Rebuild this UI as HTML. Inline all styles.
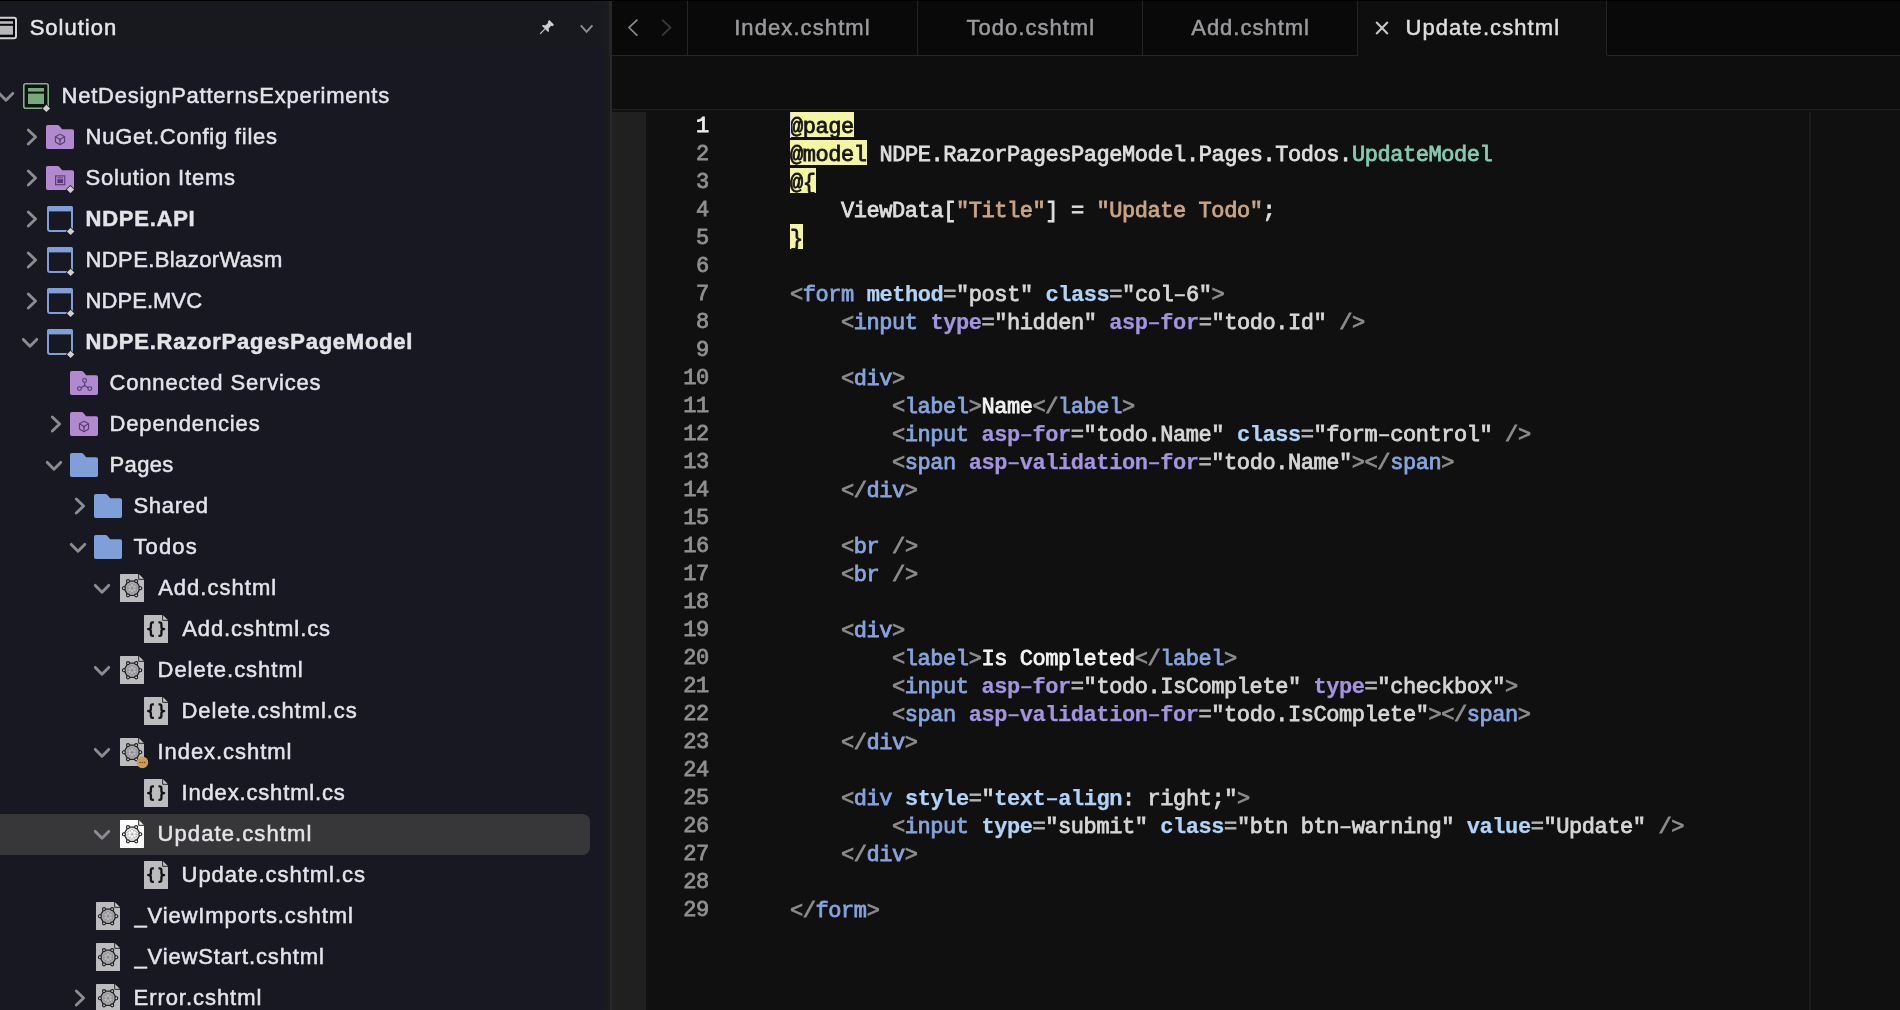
<!DOCTYPE html>
<html><head><meta charset="utf-8"><title>Update.cshtml</title><style>
*{box-sizing:border-box;margin:0;padding:0}
html,body{width:1900px;height:1010px;overflow:hidden;background:#101010}
body{position:relative;font-family:"Liberation Sans",sans-serif}
.ic{position:absolute;overflow:visible;display:block}
#top{position:absolute;left:0;top:0;width:1900px;height:1.25px;background:#000;z-index:9}
#sb{position:absolute;left:0;top:0;width:610px;height:1010px;background:#171822;overflow:hidden}
.lb,.ln,.cl{will-change:transform}
#sbh{position:absolute;left:0;top:0;width:100%;height:48px;background:#18191f}
#dv{position:absolute;left:609.9px;top:0;width:2.1px;height:1010px;background:#29292b}
#dvh{position:absolute;left:608.9px;top:0;width:3.1px;height:55.6px;background:#262628}
#sbg{position:absolute;left:602px;top:0;width:8px;height:1010px;background:linear-gradient(90deg,rgba(26,27,30,0),rgba(26,27,30,1) 40%)}
.lb{position:absolute;white-space:pre;font-size:22px;-webkit-text-stroke:0.5px currentColor}
.sel{position:absolute;left:0;width:590px;height:41px;background:#37373a;border-radius:0 7.5px 7.5px 0}
#tb{position:absolute;left:612px;top:0;width:1288px;height:56px;background:#09090a;border-bottom:1.2px solid #262628}
#tb .ic,#tb .lb,#tb .vs,#atab{margin-left:-612px}
.vs{position:absolute;top:0;width:1.2px;height:55px;background:#242426}
#atab{position:absolute;left:1358px;top:0;width:248.5px;height:57px;background:#0e0e0f}
#tool{position:absolute;left:612px;top:56px;width:1288px;height:54px;background:#0e0e0f;border-bottom:1.3px solid #222224}
#ed{position:absolute;left:612px;top:110px;width:1288px;height:900px;background:#101011}
#ed>*{margin-left:-612px;margin-top:-110px}
#gut{position:absolute;left:612px;top:112.2px;width:34px;height:900px;background:#202021}
#rul{position:absolute;left:1809.3px;top:112px;width:1.6px;height:900px;background:#1b1b1c}
.ln,.cl{position:absolute;font-family:"Liberation Mono",monospace;font-size:22.0px;letter-spacing:-0.432px;white-space:pre;line-height:28px;height:28px;-webkit-text-stroke:0.8px currentColor}
.ln{left:640px;width:68.83px;text-align:right;color:#8f8f91;letter-spacing:-0.432px}
.ln.cur{color:#ececee}
.cl{color:#dededf}
.p{color:#8c8c8e} .t{color:#87a4dd} .a{color:#b0d3f8;font-weight:700} .h{color:#a493df;font-weight:700}
.e{color:#b2b2b4} .v{color:#d6d6d8} .s{color:#c9a585} .c{color:#84cbb0} .w{color:#f4f4f4}
.r{color:#161616;position:relative;z-index:1}
.r::before{content:'';position:absolute;left:0;right:-0.432px;top:-3.5px;height:25.7px;background:#f5f5a6;z-index:-1}
.a,.h{-webkit-text-stroke:0.25px currentColor}
.cl i{font-style:normal;font-weight:400;-webkit-text-stroke:0.5px currentColor}
#caret{position:absolute;left:789.6px;top:112.4px;width:1.6px;height:25.4px;background:#d9d9ee;z-index:3}
</style></head><body><div id="top"></div>
<div id="sb"><div id="sbh"></div>
<svg class="ic" style="left:-6px;top:16px" width="26" height="26" viewBox="0 0 26 26"><rect x="1" y="1.8" width="21" height="20.4" rx="2" fill="#060607" stroke="#d2d2d6" stroke-width="2"/><rect x="4.6" y="5.2" width="14.4" height="2.6" fill="#b8b8bb"/><rect x="4.6" y="9.8" width="14.4" height="8.9" fill="#b8b8bb"/></svg>
<div class="lb" style="left:29px;padding-left:0.65px;top:7px;height:41px;line-height:41px;font-weight:400;color:#e6e6ea;letter-spacing:1.001px">Solution</div>
<svg class="ic" style="left:537px;top:17px" width="20" height="20" viewBox="0 0 20 20"><g transform="translate(8.9 11.1) rotate(45)" fill="#cdcdd0"><path d="M-3.3 -8.2 H3.3 V-6 L2 -5.2 L2.4 -1.4 Q4.6 -0.6 4.6 1.2 H-4.6 Q-4.6 -0.6 -2.4 -1.4 L-2 -5.2 L-3.3 -6 Z"/><rect x="-0.55" y="1.2" width="1.1" height="7"/></g></svg>
<svg class="ic" style="left:576px;top:20px" width="22" height="18" viewBox="0 0 22 18"><path d="M4.8 5.3 L10.6 11.9 L16.4 5.3" fill="none" stroke="#8c8c91" stroke-width="1.9" stroke-linecap="butt" stroke-linejoin="miter"/></svg>
<svg class="ic" style="left:-5px;top:87.8px" width="22" height="16" viewBox="0 0 22 16"><path d="M4.3 5.4 L11 12.3 L17.7 5.4" fill="none" stroke="#8b8b91" stroke-width="2.9" stroke-linecap="round" stroke-linejoin="round"/></svg>
<svg class="ic" style="left:23px;top:83px" width="32" height="32" viewBox="0 0 32 32"><rect x="0.8" y="0.8" width="24.4" height="24.4" rx="2" fill="#0d1510" stroke="#86b08a" stroke-width="1.6"/><rect x="5" y="5" width="16" height="3.6" fill="#78a87c"/><rect x="5" y="10.6" width="16" height="10.4" fill="#78a87c"/><path d="M23.4 21.7 L27.099999999999998 25.4 L23.4 29.099999999999998 L19.7 25.4 Z" fill="#cfcfd1" stroke="#171822" stroke-width="1.4" paint-order="stroke"/></svg>
<div class="lb" style="left:61px;padding-left:0.50px;top:75.0px;height:41px;line-height:41px;font-weight:400;color:#e4e4e8;letter-spacing:0.768px">NetDesignPatternsExperiments</div>
<svg class="ic" style="left:24px;top:126px" width="16" height="22" viewBox="0 0 16 22"><path d="M4.3 4 L11.6 11 L4.3 18" fill="none" stroke="#8b8b91" stroke-width="2.9" stroke-linecap="round" stroke-linejoin="round"/></svg>
<svg class="ic" style="left:46px;top:125px" width="34" height="30" viewBox="0 0 34 30"><path d="M0 1.8 Q0 0 1.8 0 H11.6 Q12.6 0 13.4 0.9 L16.2 4.2 H26.2 Q28 4.2 28 6 V22.2 Q28 24 26.2 24 H1.8 Q0 24 0 22.2 Z" fill="#b189ce"/><path d="M14 9.1 L18.6 11.75 V17.05 L14 19.7 L9.4 17.05 V11.75 Z" fill="none" stroke="#573a72" stroke-width="1.05" stroke-linejoin="round"/><path d="M9.8 12 L14 14.4 L18.2 12 M14 14.4 V19.3" fill="none" stroke="#573a72" stroke-width="1.05"/><path d="M12.4 13.5 L14 14.4 L15.6 13.5 L14 16.8Z" fill="#573a72"/></svg>
<div class="lb" style="left:85px;padding-left:0.50px;top:116.0px;height:41px;line-height:41px;font-weight:400;color:#e4e4e8;letter-spacing:0.766px">NuGet.Config files</div>
<svg class="ic" style="left:24px;top:167px" width="16" height="22" viewBox="0 0 16 22"><path d="M4.3 4 L11.6 11 L4.3 18" fill="none" stroke="#8b8b91" stroke-width="2.9" stroke-linecap="round" stroke-linejoin="round"/></svg>
<svg class="ic" style="left:46px;top:166px" width="34" height="30" viewBox="0 0 34 30"><path d="M0 1.8 Q0 0 1.8 0 H11.6 Q12.6 0 13.4 0.9 L16.2 4.2 H26.2 Q28 4.2 28 6 V22.2 Q28 24 26.2 24 H1.8 Q0 24 0 22.2 Z" fill="#b189ce"/><rect x="9.6" y="9.9" width="9.2" height="8.8" fill="none" stroke="#573a72" stroke-width="1.1"/><rect x="11.3" y="13.2" width="5.8" height="3.9" fill="#573a72"/><rect x="11.3" y="11.4" width="5.8" height="0.9" fill="#573a72"/><path d="M24.4 19.900000000000002 L28.099999999999998 23.6 L24.4 27.3 L20.7 23.6 Z" fill="#cfcfd1" stroke="#171822" stroke-width="1.4" paint-order="stroke"/></svg>
<div class="lb" style="left:85px;padding-left:0.50px;top:157.0px;height:41px;line-height:41px;font-weight:400;color:#e4e4e8;letter-spacing:0.778px">Solution Items</div>
<svg class="ic" style="left:24px;top:208px" width="16" height="22" viewBox="0 0 16 22"><path d="M4.3 4 L11.6 11 L4.3 18" fill="none" stroke="#8b8b91" stroke-width="2.9" stroke-linecap="round" stroke-linejoin="round"/></svg>
<svg class="ic" style="left:47px;top:206px" width="32" height="32" viewBox="0 0 32 32"><rect x="1" y="1" width="24" height="24" rx="2" fill="none" stroke="#7f9fd9" stroke-width="2"/><rect x="1" y="0.4" width="24" height="4.8" fill="#7f9fd9"/><path d="M0 2 Q0 0 2 0 H24 Q26 0 26 2 V5.2 H0 Z" fill="#7f9fd9"/><path d="M23.6 21.7 L27.3 25.4 L23.6 29.099999999999998 L19.900000000000002 25.4 Z" fill="#cfcfd1" stroke="#171822" stroke-width="1.4" paint-order="stroke"/></svg>
<div class="lb" style="left:85px;padding-left:0.50px;top:198.0px;height:41px;line-height:41px;font-weight:700;color:#e4e4e8;letter-spacing:0.752px">NDPE.API</div>
<svg class="ic" style="left:24px;top:249px" width="16" height="22" viewBox="0 0 16 22"><path d="M4.3 4 L11.6 11 L4.3 18" fill="none" stroke="#8b8b91" stroke-width="2.9" stroke-linecap="round" stroke-linejoin="round"/></svg>
<svg class="ic" style="left:47px;top:247px" width="32" height="32" viewBox="0 0 32 32"><rect x="1" y="1" width="24" height="24" rx="2" fill="none" stroke="#7f9fd9" stroke-width="2"/><rect x="1" y="0.4" width="24" height="4.8" fill="#7f9fd9"/><path d="M0 2 Q0 0 2 0 H24 Q26 0 26 2 V5.2 H0 Z" fill="#7f9fd9"/><path d="M23.6 21.7 L27.3 25.4 L23.6 29.099999999999998 L19.900000000000002 25.4 Z" fill="#cfcfd1" stroke="#171822" stroke-width="1.4" paint-order="stroke"/></svg>
<div class="lb" style="left:85px;padding-left:0.50px;top:239.0px;height:41px;line-height:41px;font-weight:400;color:#e4e4e8;letter-spacing:0.401px">NDPE.BlazorWasm</div>
<svg class="ic" style="left:24px;top:290px" width="16" height="22" viewBox="0 0 16 22"><path d="M4.3 4 L11.6 11 L4.3 18" fill="none" stroke="#8b8b91" stroke-width="2.9" stroke-linecap="round" stroke-linejoin="round"/></svg>
<svg class="ic" style="left:47px;top:288px" width="32" height="32" viewBox="0 0 32 32"><rect x="1" y="1" width="24" height="24" rx="2" fill="none" stroke="#7f9fd9" stroke-width="2"/><rect x="1" y="0.4" width="24" height="4.8" fill="#7f9fd9"/><path d="M0 2 Q0 0 2 0 H24 Q26 0 26 2 V5.2 H0 Z" fill="#7f9fd9"/><path d="M23.6 21.7 L27.3 25.4 L23.6 29.099999999999998 L19.900000000000002 25.4 Z" fill="#cfcfd1" stroke="#171822" stroke-width="1.4" paint-order="stroke"/></svg>
<div class="lb" style="left:85px;padding-left:0.50px;top:280.0px;height:41px;line-height:41px;font-weight:400;color:#e4e4e8;letter-spacing:0.067px">NDPE.MVC</div>
<svg class="ic" style="left:19px;top:333.8px" width="22" height="16" viewBox="0 0 22 16"><path d="M4.3 5.4 L11 12.3 L17.7 5.4" fill="none" stroke="#8b8b91" stroke-width="2.9" stroke-linecap="round" stroke-linejoin="round"/></svg>
<svg class="ic" style="left:47px;top:329px" width="32" height="32" viewBox="0 0 32 32"><rect x="1" y="1" width="24" height="24" rx="2" fill="none" stroke="#7f9fd9" stroke-width="2"/><rect x="1" y="0.4" width="24" height="4.8" fill="#7f9fd9"/><path d="M0 2 Q0 0 2 0 H24 Q26 0 26 2 V5.2 H0 Z" fill="#7f9fd9"/><path d="M23.6 21.7 L27.3 25.4 L23.6 29.099999999999998 L19.900000000000002 25.4 Z" fill="#cfcfd1" stroke="#171822" stroke-width="1.4" paint-order="stroke"/></svg>
<div class="lb" style="left:85px;padding-left:0.50px;top:321.0px;height:41px;line-height:41px;font-weight:700;color:#e4e4e8;letter-spacing:0.768px">NDPE.RazorPagesPageModel</div>
<svg class="ic" style="left:70px;top:371px" width="34" height="30" viewBox="0 0 34 30"><path d="M0 1.8 Q0 0 1.8 0 H11.6 Q12.6 0 13.4 0.9 L16.2 4.2 H26.2 Q28 4.2 28 6 V22.2 Q28 24 26.2 24 H1.8 Q0 24 0 22.2 Z" fill="#b189ce"/><path d="M14.6 11.3 V14.6 L11 16.7 M14.6 14.6 L18.2 16.7" fill="none" stroke="#573a72" stroke-width="1.1"/><circle cx="14.6" cy="9.4" r="1.9" fill="none" stroke="#573a72" stroke-width="1.1"/><circle cx="9.4" cy="17.6" r="1.9" fill="none" stroke="#573a72" stroke-width="1.1"/><circle cx="19.8" cy="17.6" r="1.9" fill="none" stroke="#573a72" stroke-width="1.1"/></svg>
<div class="lb" style="left:109px;padding-left:0.50px;top:362.0px;height:41px;line-height:41px;font-weight:400;color:#e4e4e8;letter-spacing:0.837px">Connected Services</div>
<svg class="ic" style="left:48px;top:413px" width="16" height="22" viewBox="0 0 16 22"><path d="M4.3 4 L11.6 11 L4.3 18" fill="none" stroke="#8b8b91" stroke-width="2.9" stroke-linecap="round" stroke-linejoin="round"/></svg>
<svg class="ic" style="left:70px;top:412px" width="34" height="30" viewBox="0 0 34 30"><path d="M0 1.8 Q0 0 1.8 0 H11.6 Q12.6 0 13.4 0.9 L16.2 4.2 H26.2 Q28 4.2 28 6 V22.2 Q28 24 26.2 24 H1.8 Q0 24 0 22.2 Z" fill="#b189ce"/><path d="M14 9.1 L18.6 11.75 V17.05 L14 19.7 L9.4 17.05 V11.75 Z" fill="none" stroke="#573a72" stroke-width="1.05" stroke-linejoin="round"/><path d="M9.8 12 L14 14.4 L18.2 12 M14 14.4 V19.3" fill="none" stroke="#573a72" stroke-width="1.05"/><path d="M12.4 13.5 L14 14.4 L15.6 13.5 L14 16.8Z" fill="#573a72"/></svg>
<div class="lb" style="left:109px;padding-left:0.50px;top:403.0px;height:41px;line-height:41px;font-weight:400;color:#e4e4e8;letter-spacing:0.870px">Dependencies</div>
<svg class="ic" style="left:43px;top:456.8px" width="22" height="16" viewBox="0 0 22 16"><path d="M4.3 5.4 L11 12.3 L17.7 5.4" fill="none" stroke="#8b8b91" stroke-width="2.9" stroke-linecap="round" stroke-linejoin="round"/></svg>
<svg class="ic" style="left:70px;top:453px" width="34" height="30" viewBox="0 0 34 30"><path d="M0 1.8 Q0 0 1.8 0 H11.6 Q12.6 0 13.4 0.9 L16.2 4.2 H26.2 Q28 4.2 28 6 V22.2 Q28 24 26.2 24 H1.8 Q0 24 0 22.2 Z" fill="#7f9fd8"/></svg>
<div class="lb" style="left:109px;padding-left:0.50px;top:444.0px;height:41px;line-height:41px;font-weight:400;color:#e4e4e8;letter-spacing:0.363px">Pages</div>
<svg class="ic" style="left:72px;top:495px" width="16" height="22" viewBox="0 0 16 22"><path d="M4.3 4 L11.6 11 L4.3 18" fill="none" stroke="#8b8b91" stroke-width="2.9" stroke-linecap="round" stroke-linejoin="round"/></svg>
<svg class="ic" style="left:94px;top:494px" width="34" height="30" viewBox="0 0 34 30"><path d="M0 1.8 Q0 0 1.8 0 H11.6 Q12.6 0 13.4 0.9 L16.2 4.2 H26.2 Q28 4.2 28 6 V22.2 Q28 24 26.2 24 H1.8 Q0 24 0 22.2 Z" fill="#7f9fd8"/></svg>
<div class="lb" style="left:133px;padding-left:0.50px;top:485.0px;height:41px;line-height:41px;font-weight:400;color:#e4e4e8;letter-spacing:0.684px">Shared</div>
<svg class="ic" style="left:67px;top:538.8px" width="22" height="16" viewBox="0 0 22 16"><path d="M4.3 5.4 L11 12.3 L17.7 5.4" fill="none" stroke="#8b8b91" stroke-width="2.9" stroke-linecap="round" stroke-linejoin="round"/></svg>
<svg class="ic" style="left:94px;top:535px" width="34" height="30" viewBox="0 0 34 30"><path d="M0 1.8 Q0 0 1.8 0 H11.6 Q12.6 0 13.4 0.9 L16.2 4.2 H26.2 Q28 4.2 28 6 V22.2 Q28 24 26.2 24 H1.8 Q0 24 0 22.2 Z" fill="#7f9fd8"/></svg>
<div class="lb" style="left:133px;padding-left:0.50px;top:526.0px;height:41px;line-height:41px;font-weight:400;color:#e4e4e8;letter-spacing:1.106px">Todos</div>
<svg class="ic" style="left:91px;top:579.8px" width="22" height="16" viewBox="0 0 22 16"><path d="M4.3 5.4 L11 12.3 L17.7 5.4" fill="none" stroke="#8b8b91" stroke-width="2.9" stroke-linecap="round" stroke-linejoin="round"/></svg>
<svg class="ic" style="left:120px;top:574px" width="32" height="36" viewBox="0 0 32 36"><path d="M0.5 0 H18.6 L24 5.4 V27.5 Q24 28 23.5 28 H0.5 Q0 28 0 27.5 V0.5 Q0 0 0.5 0 Z" fill="#bcbcbf"/><path d="M18.9 0.3 V5.1 H23.7 Z" fill="#c9c9cb"/><path d="M18.7 0 V5.3 H24" fill="none" stroke="#232325" stroke-width="1"/><path d="M20.30 14.20 L8.00 21.30 M20.30 14.20 L3.90 14.20 M20.30 14.20 L8.00 7.10 M16.20 21.30 L3.90 14.20 M16.20 21.30 L8.00 7.10 M16.20 21.30 L16.20 7.10 M8.00 21.30 L8.00 7.10 M8.00 21.30 L16.20 7.10 M3.90 14.20 L16.20 7.10 " fill="none" stroke="#38383a" stroke-width="0.5" opacity="0.5"/><path d="M20.30 14.20 L16.20 21.30 L8.00 21.30 L3.90 14.20 L8.00 7.10 L16.20 7.10 Z" fill="none" stroke="#1f1f21" stroke-width="1.3"/><circle cx="20.30" cy="14.20" r="1.5" fill="#cbcbcd" stroke="#1f1f21" stroke-width="1.15"/><circle cx="16.20" cy="21.30" r="1.5" fill="#cbcbcd" stroke="#1f1f21" stroke-width="1.15"/><circle cx="8.00" cy="21.30" r="1.5" fill="#cbcbcd" stroke="#1f1f21" stroke-width="1.15"/><circle cx="3.90" cy="14.20" r="1.5" fill="#cbcbcd" stroke="#1f1f21" stroke-width="1.15"/><circle cx="8.00" cy="7.10" r="1.5" fill="#cbcbcd" stroke="#1f1f21" stroke-width="1.15"/><circle cx="16.20" cy="7.10" r="1.5" fill="#cbcbcd" stroke="#1f1f21" stroke-width="1.15"/></svg>
<div class="lb" style="left:158px;padding-left:0.20px;top:567.0px;height:41px;line-height:41px;font-weight:400;color:#e4e4e8;letter-spacing:1.013px">Add.cshtml</div>
<svg class="ic" style="left:144px;top:615px" width="28" height="32" viewBox="0 0 28 32"><path d="M0.5 0 H18.6 L24 5.4 V27.5 Q24 28 23.5 28 H0.5 Q0 28 0 27.5 V0.5 Q0 0 0.5 0 Z" fill="#bcbcbf"/><path d="M18.9 0.3 V5.1 H23.7 Z" fill="#c9c9cb"/><path d="M18.7 0 V5.3 H24" fill="none" stroke="#232325" stroke-width="1"/><path d="M9.9 7.3 H8.7 Q6.9 7.3 6.9 9.1 V11.9 Q6.9 14.05 4.1 14.05 Q6.9 14.05 6.9 16.2 V19 Q6.9 20.8 8.7 20.8 H9.9" fill="none" stroke="#141416" stroke-width="2.3" stroke-linejoin="round"/><path d="M14.5 7.3 H15.7 Q17.4 7.3 17.4 9.1 V11.9 Q17.4 14.05 20.2 14.05 Q17.4 14.05 17.4 16.2 V19 Q17.4 20.8 15.7 20.8 H14.5" fill="none" stroke="#141416" stroke-width="2.3" stroke-linejoin="round"/></svg>
<div class="lb" style="left:182px;padding-left:0.20px;top:608.0px;height:41px;line-height:41px;font-weight:400;color:#e4e4e8;letter-spacing:0.912px">Add.cshtml.cs</div>
<svg class="ic" style="left:91px;top:661.8px" width="22" height="16" viewBox="0 0 22 16"><path d="M4.3 5.4 L11 12.3 L17.7 5.4" fill="none" stroke="#8b8b91" stroke-width="2.9" stroke-linecap="round" stroke-linejoin="round"/></svg>
<svg class="ic" style="left:120px;top:656px" width="32" height="36" viewBox="0 0 32 36"><path d="M0.5 0 H18.6 L24 5.4 V27.5 Q24 28 23.5 28 H0.5 Q0 28 0 27.5 V0.5 Q0 0 0.5 0 Z" fill="#bcbcbf"/><path d="M18.9 0.3 V5.1 H23.7 Z" fill="#c9c9cb"/><path d="M18.7 0 V5.3 H24" fill="none" stroke="#232325" stroke-width="1"/><path d="M20.30 14.20 L8.00 21.30 M20.30 14.20 L3.90 14.20 M20.30 14.20 L8.00 7.10 M16.20 21.30 L3.90 14.20 M16.20 21.30 L8.00 7.10 M16.20 21.30 L16.20 7.10 M8.00 21.30 L8.00 7.10 M8.00 21.30 L16.20 7.10 M3.90 14.20 L16.20 7.10 " fill="none" stroke="#38383a" stroke-width="0.5" opacity="0.5"/><path d="M20.30 14.20 L16.20 21.30 L8.00 21.30 L3.90 14.20 L8.00 7.10 L16.20 7.10 Z" fill="none" stroke="#1f1f21" stroke-width="1.3"/><circle cx="20.30" cy="14.20" r="1.5" fill="#cbcbcd" stroke="#1f1f21" stroke-width="1.15"/><circle cx="16.20" cy="21.30" r="1.5" fill="#cbcbcd" stroke="#1f1f21" stroke-width="1.15"/><circle cx="8.00" cy="21.30" r="1.5" fill="#cbcbcd" stroke="#1f1f21" stroke-width="1.15"/><circle cx="3.90" cy="14.20" r="1.5" fill="#cbcbcd" stroke="#1f1f21" stroke-width="1.15"/><circle cx="8.00" cy="7.10" r="1.5" fill="#cbcbcd" stroke="#1f1f21" stroke-width="1.15"/><circle cx="16.20" cy="7.10" r="1.5" fill="#cbcbcd" stroke="#1f1f21" stroke-width="1.15"/></svg>
<div class="lb" style="left:157px;padding-left:0.50px;top:649.0px;height:41px;line-height:41px;font-weight:400;color:#e4e4e8;letter-spacing:0.989px">Delete.cshtml</div>
<svg class="ic" style="left:144px;top:697px" width="28" height="32" viewBox="0 0 28 32"><path d="M0.5 0 H18.6 L24 5.4 V27.5 Q24 28 23.5 28 H0.5 Q0 28 0 27.5 V0.5 Q0 0 0.5 0 Z" fill="#bcbcbf"/><path d="M18.9 0.3 V5.1 H23.7 Z" fill="#c9c9cb"/><path d="M18.7 0 V5.3 H24" fill="none" stroke="#232325" stroke-width="1"/><path d="M9.9 7.3 H8.7 Q6.9 7.3 6.9 9.1 V11.9 Q6.9 14.05 4.1 14.05 Q6.9 14.05 6.9 16.2 V19 Q6.9 20.8 8.7 20.8 H9.9" fill="none" stroke="#141416" stroke-width="2.3" stroke-linejoin="round"/><path d="M14.5 7.3 H15.7 Q17.4 7.3 17.4 9.1 V11.9 Q17.4 14.05 20.2 14.05 Q17.4 14.05 17.4 16.2 V19 Q17.4 20.8 15.7 20.8 H14.5" fill="none" stroke="#141416" stroke-width="2.3" stroke-linejoin="round"/></svg>
<div class="lb" style="left:181px;padding-left:0.50px;top:690.0px;height:41px;line-height:41px;font-weight:400;color:#e4e4e8;letter-spacing:0.917px">Delete.cshtml.cs</div>
<svg class="ic" style="left:91px;top:743.8px" width="22" height="16" viewBox="0 0 22 16"><path d="M4.3 5.4 L11 12.3 L17.7 5.4" fill="none" stroke="#8b8b91" stroke-width="2.9" stroke-linecap="round" stroke-linejoin="round"/></svg>
<svg class="ic" style="left:120px;top:738px" width="32" height="36" viewBox="0 0 32 36"><path d="M0.5 0 H18.6 L24 5.4 V27.5 Q24 28 23.5 28 H0.5 Q0 28 0 27.5 V0.5 Q0 0 0.5 0 Z" fill="#bcbcbf"/><path d="M18.9 0.3 V5.1 H23.7 Z" fill="#c9c9cb"/><path d="M18.7 0 V5.3 H24" fill="none" stroke="#232325" stroke-width="1"/><path d="M20.30 14.20 L8.00 21.30 M20.30 14.20 L3.90 14.20 M20.30 14.20 L8.00 7.10 M16.20 21.30 L3.90 14.20 M16.20 21.30 L8.00 7.10 M16.20 21.30 L16.20 7.10 M8.00 21.30 L8.00 7.10 M8.00 21.30 L16.20 7.10 M3.90 14.20 L16.20 7.10 " fill="none" stroke="#38383a" stroke-width="0.5" opacity="0.5"/><path d="M20.30 14.20 L16.20 21.30 L8.00 21.30 L3.90 14.20 L8.00 7.10 L16.20 7.10 Z" fill="none" stroke="#1f1f21" stroke-width="1.3"/><circle cx="20.30" cy="14.20" r="1.5" fill="#cbcbcd" stroke="#1f1f21" stroke-width="1.15"/><circle cx="16.20" cy="21.30" r="1.5" fill="#cbcbcd" stroke="#1f1f21" stroke-width="1.15"/><circle cx="8.00" cy="21.30" r="1.5" fill="#cbcbcd" stroke="#1f1f21" stroke-width="1.15"/><circle cx="3.90" cy="14.20" r="1.5" fill="#cbcbcd" stroke="#1f1f21" stroke-width="1.15"/><circle cx="8.00" cy="7.10" r="1.5" fill="#cbcbcd" stroke="#1f1f21" stroke-width="1.15"/><circle cx="16.20" cy="7.10" r="1.5" fill="#cbcbcd" stroke="#1f1f21" stroke-width="1.15"/><circle cx="22.4" cy="24.4" r="5.8" fill="#d29a57"/><circle cx="20.1" cy="24.5" r="0.8" fill="#6b4a22"/><circle cx="22.4" cy="24.5" r="0.8" fill="#6b4a22"/><circle cx="24.7" cy="24.5" r="0.8" fill="#6b4a22"/></svg>
<div class="lb" style="left:157px;padding-left:0.50px;top:731.0px;height:41px;line-height:41px;font-weight:400;color:#e4e4e8;letter-spacing:0.946px">Index.cshtml</div>
<svg class="ic" style="left:144px;top:779px" width="28" height="32" viewBox="0 0 28 32"><path d="M0.5 0 H18.6 L24 5.4 V27.5 Q24 28 23.5 28 H0.5 Q0 28 0 27.5 V0.5 Q0 0 0.5 0 Z" fill="#bcbcbf"/><path d="M18.9 0.3 V5.1 H23.7 Z" fill="#c9c9cb"/><path d="M18.7 0 V5.3 H24" fill="none" stroke="#232325" stroke-width="1"/><path d="M9.9 7.3 H8.7 Q6.9 7.3 6.9 9.1 V11.9 Q6.9 14.05 4.1 14.05 Q6.9 14.05 6.9 16.2 V19 Q6.9 20.8 8.7 20.8 H9.9" fill="none" stroke="#141416" stroke-width="2.3" stroke-linejoin="round"/><path d="M14.5 7.3 H15.7 Q17.4 7.3 17.4 9.1 V11.9 Q17.4 14.05 20.2 14.05 Q17.4 14.05 17.4 16.2 V19 Q17.4 20.8 15.7 20.8 H14.5" fill="none" stroke="#141416" stroke-width="2.3" stroke-linejoin="round"/></svg>
<div class="lb" style="left:181px;padding-left:0.50px;top:772.0px;height:41px;line-height:41px;font-weight:400;color:#e4e4e8;letter-spacing:0.836px">Index.cshtml.cs</div>
<div class="sel" style="top:813.5px"></div>
<svg class="ic" style="left:91px;top:825.8px" width="22" height="16" viewBox="0 0 22 16"><path d="M4.3 5.4 L11 12.3 L17.7 5.4" fill="none" stroke="#8b8b91" stroke-width="2.9" stroke-linecap="round" stroke-linejoin="round"/></svg>
<svg class="ic" style="left:120px;top:820px" width="32" height="36" viewBox="0 0 32 36"><path d="M0.5 0 H18.6 L24 5.4 V27.5 Q24 28 23.5 28 H0.5 Q0 28 0 27.5 V0.5 Q0 0 0.5 0 Z" fill="#ffffff"/><path d="M18.9 0.3 V5.1 H23.7 Z" fill="#f0f0f0"/><path d="M18.7 0 V5.3 H24" fill="none" stroke="#232325" stroke-width="1"/><path d="M20.30 14.20 L8.00 21.30 M20.30 14.20 L3.90 14.20 M20.30 14.20 L8.00 7.10 M16.20 21.30 L3.90 14.20 M16.20 21.30 L8.00 7.10 M16.20 21.30 L16.20 7.10 M8.00 21.30 L8.00 7.10 M8.00 21.30 L16.20 7.10 M3.90 14.20 L16.20 7.10 " fill="none" stroke="#38383a" stroke-width="0.5" opacity="0.5"/><path d="M20.30 14.20 L16.20 21.30 L8.00 21.30 L3.90 14.20 L8.00 7.10 L16.20 7.10 Z" fill="none" stroke="#262628" stroke-width="1.3"/><circle cx="20.30" cy="14.20" r="1.5" fill="#ffffff" stroke="#262628" stroke-width="1.15"/><circle cx="16.20" cy="21.30" r="1.5" fill="#ffffff" stroke="#262628" stroke-width="1.15"/><circle cx="8.00" cy="21.30" r="1.5" fill="#ffffff" stroke="#262628" stroke-width="1.15"/><circle cx="3.90" cy="14.20" r="1.5" fill="#ffffff" stroke="#262628" stroke-width="1.15"/><circle cx="8.00" cy="7.10" r="1.5" fill="#ffffff" stroke="#262628" stroke-width="1.15"/><circle cx="16.20" cy="7.10" r="1.5" fill="#ffffff" stroke="#262628" stroke-width="1.15"/></svg>
<div class="lb" style="left:157px;padding-left:0.50px;top:813.0px;height:41px;line-height:41px;font-weight:400;color:#e4e4e8;letter-spacing:1.102px">Update.cshtml</div>
<svg class="ic" style="left:144px;top:861px" width="28" height="32" viewBox="0 0 28 32"><path d="M0.5 0 H18.6 L24 5.4 V27.5 Q24 28 23.5 28 H0.5 Q0 28 0 27.5 V0.5 Q0 0 0.5 0 Z" fill="#bcbcbf"/><path d="M18.9 0.3 V5.1 H23.7 Z" fill="#c9c9cb"/><path d="M18.7 0 V5.3 H24" fill="none" stroke="#232325" stroke-width="1"/><path d="M9.9 7.3 H8.7 Q6.9 7.3 6.9 9.1 V11.9 Q6.9 14.05 4.1 14.05 Q6.9 14.05 6.9 16.2 V19 Q6.9 20.8 8.7 20.8 H9.9" fill="none" stroke="#141416" stroke-width="2.3" stroke-linejoin="round"/><path d="M14.5 7.3 H15.7 Q17.4 7.3 17.4 9.1 V11.9 Q17.4 14.05 20.2 14.05 Q17.4 14.05 17.4 16.2 V19 Q17.4 20.8 15.7 20.8 H14.5" fill="none" stroke="#141416" stroke-width="2.3" stroke-linejoin="round"/></svg>
<div class="lb" style="left:181px;padding-left:0.50px;top:854.0px;height:41px;line-height:41px;font-weight:400;color:#e4e4e8;letter-spacing:0.989px">Update.cshtml.cs</div>
<svg class="ic" style="left:96px;top:902px" width="32" height="36" viewBox="0 0 32 36"><path d="M0.5 0 H18.6 L24 5.4 V27.5 Q24 28 23.5 28 H0.5 Q0 28 0 27.5 V0.5 Q0 0 0.5 0 Z" fill="#bcbcbf"/><path d="M18.9 0.3 V5.1 H23.7 Z" fill="#c9c9cb"/><path d="M18.7 0 V5.3 H24" fill="none" stroke="#232325" stroke-width="1"/><path d="M20.30 14.20 L8.00 21.30 M20.30 14.20 L3.90 14.20 M20.30 14.20 L8.00 7.10 M16.20 21.30 L3.90 14.20 M16.20 21.30 L8.00 7.10 M16.20 21.30 L16.20 7.10 M8.00 21.30 L8.00 7.10 M8.00 21.30 L16.20 7.10 M3.90 14.20 L16.20 7.10 " fill="none" stroke="#38383a" stroke-width="0.5" opacity="0.5"/><path d="M20.30 14.20 L16.20 21.30 L8.00 21.30 L3.90 14.20 L8.00 7.10 L16.20 7.10 Z" fill="none" stroke="#1f1f21" stroke-width="1.3"/><circle cx="20.30" cy="14.20" r="1.5" fill="#cbcbcd" stroke="#1f1f21" stroke-width="1.15"/><circle cx="16.20" cy="21.30" r="1.5" fill="#cbcbcd" stroke="#1f1f21" stroke-width="1.15"/><circle cx="8.00" cy="21.30" r="1.5" fill="#cbcbcd" stroke="#1f1f21" stroke-width="1.15"/><circle cx="3.90" cy="14.20" r="1.5" fill="#cbcbcd" stroke="#1f1f21" stroke-width="1.15"/><circle cx="8.00" cy="7.10" r="1.5" fill="#cbcbcd" stroke="#1f1f21" stroke-width="1.15"/><circle cx="16.20" cy="7.10" r="1.5" fill="#cbcbcd" stroke="#1f1f21" stroke-width="1.15"/></svg>
<div class="lb" style="left:134px;padding-left:0.40px;top:895.0px;height:41px;line-height:41px;font-weight:400;color:#e4e4e8;letter-spacing:0.883px">_ViewImports.cshtml</div>
<svg class="ic" style="left:96px;top:943px" width="32" height="36" viewBox="0 0 32 36"><path d="M0.5 0 H18.6 L24 5.4 V27.5 Q24 28 23.5 28 H0.5 Q0 28 0 27.5 V0.5 Q0 0 0.5 0 Z" fill="#bcbcbf"/><path d="M18.9 0.3 V5.1 H23.7 Z" fill="#c9c9cb"/><path d="M18.7 0 V5.3 H24" fill="none" stroke="#232325" stroke-width="1"/><path d="M20.30 14.20 L8.00 21.30 M20.30 14.20 L3.90 14.20 M20.30 14.20 L8.00 7.10 M16.20 21.30 L3.90 14.20 M16.20 21.30 L8.00 7.10 M16.20 21.30 L16.20 7.10 M8.00 21.30 L8.00 7.10 M8.00 21.30 L16.20 7.10 M3.90 14.20 L16.20 7.10 " fill="none" stroke="#38383a" stroke-width="0.5" opacity="0.5"/><path d="M20.30 14.20 L16.20 21.30 L8.00 21.30 L3.90 14.20 L8.00 7.10 L16.20 7.10 Z" fill="none" stroke="#1f1f21" stroke-width="1.3"/><circle cx="20.30" cy="14.20" r="1.5" fill="#cbcbcd" stroke="#1f1f21" stroke-width="1.15"/><circle cx="16.20" cy="21.30" r="1.5" fill="#cbcbcd" stroke="#1f1f21" stroke-width="1.15"/><circle cx="8.00" cy="21.30" r="1.5" fill="#cbcbcd" stroke="#1f1f21" stroke-width="1.15"/><circle cx="3.90" cy="14.20" r="1.5" fill="#cbcbcd" stroke="#1f1f21" stroke-width="1.15"/><circle cx="8.00" cy="7.10" r="1.5" fill="#cbcbcd" stroke="#1f1f21" stroke-width="1.15"/><circle cx="16.20" cy="7.10" r="1.5" fill="#cbcbcd" stroke="#1f1f21" stroke-width="1.15"/></svg>
<div class="lb" style="left:134px;padding-left:0.40px;top:936.0px;height:41px;line-height:41px;font-weight:400;color:#e4e4e8;letter-spacing:0.862px">_ViewStart.cshtml</div>
<svg class="ic" style="left:72px;top:987px" width="16" height="22" viewBox="0 0 16 22"><path d="M4.3 4 L11.6 11 L4.3 18" fill="none" stroke="#8b8b91" stroke-width="2.9" stroke-linecap="round" stroke-linejoin="round"/></svg>
<svg class="ic" style="left:96px;top:984px" width="32" height="36" viewBox="0 0 32 36"><path d="M0.5 0 H18.6 L24 5.4 V27.5 Q24 28 23.5 28 H0.5 Q0 28 0 27.5 V0.5 Q0 0 0.5 0 Z" fill="#bcbcbf"/><path d="M18.9 0.3 V5.1 H23.7 Z" fill="#c9c9cb"/><path d="M18.7 0 V5.3 H24" fill="none" stroke="#232325" stroke-width="1"/><path d="M20.30 14.20 L8.00 21.30 M20.30 14.20 L3.90 14.20 M20.30 14.20 L8.00 7.10 M16.20 21.30 L3.90 14.20 M16.20 21.30 L8.00 7.10 M16.20 21.30 L16.20 7.10 M8.00 21.30 L8.00 7.10 M8.00 21.30 L16.20 7.10 M3.90 14.20 L16.20 7.10 " fill="none" stroke="#38383a" stroke-width="0.5" opacity="0.5"/><path d="M20.30 14.20 L16.20 21.30 L8.00 21.30 L3.90 14.20 L8.00 7.10 L16.20 7.10 Z" fill="none" stroke="#1f1f21" stroke-width="1.3"/><circle cx="20.30" cy="14.20" r="1.5" fill="#cbcbcd" stroke="#1f1f21" stroke-width="1.15"/><circle cx="16.20" cy="21.30" r="1.5" fill="#cbcbcd" stroke="#1f1f21" stroke-width="1.15"/><circle cx="8.00" cy="21.30" r="1.5" fill="#cbcbcd" stroke="#1f1f21" stroke-width="1.15"/><circle cx="3.90" cy="14.20" r="1.5" fill="#cbcbcd" stroke="#1f1f21" stroke-width="1.15"/><circle cx="8.00" cy="7.10" r="1.5" fill="#cbcbcd" stroke="#1f1f21" stroke-width="1.15"/><circle cx="16.20" cy="7.10" r="1.5" fill="#cbcbcd" stroke="#1f1f21" stroke-width="1.15"/></svg>
<div class="lb" style="left:133px;padding-left:0.50px;top:977.0px;height:41px;line-height:41px;font-weight:400;color:#e4e4e8;letter-spacing:0.952px">Error.cshtml</div>
</div>
<div id="sbg"></div><div id="dv"></div><div id="dvh"></div>
<div id="tb">
<div class="vs" style="left:687px"></div>
<svg class="ic" style="left:624px;top:15px" width="18" height="26" viewBox="0 0 18 26"><path d="M13.4 4.6 L5 12.6 L13.4 20.6" fill="none" stroke="#8a8a8e" stroke-width="1.7"/></svg>
<svg class="ic" style="left:657px;top:15px" width="18" height="26" viewBox="0 0 18 26"><path d="M5 4.6 L13.4 12.6 L5 20.6" fill="none" stroke="#3c3c40" stroke-width="1.7"/></svg>
<div class="vs" style="left:917px"></div>
<div class="vs" style="left:1142px"></div>
<div class="vs" style="left:1357px"></div>
<div id="atab"></div>
<div class="vs" style="left:1357px;height:55px"></div><div class="vs" style="left:1606px;height:55px"></div>
<div class="lb" style="left:734px;padding-left:0.15px;top:7px;height:41px;line-height:41px;font-weight:400;color:#9b9b9f;letter-spacing:1.092px">Index.cshtml</div>
<div class="lb" style="left:966px;padding-left:0.47px;top:7px;height:41px;line-height:41px;font-weight:400;color:#9b9b9f;letter-spacing:1.024px">Todo.cshtml</div>
<div class="lb" style="left:1191px;padding-left:0.23px;top:7px;height:41px;line-height:41px;font-weight:400;color:#9b9b9f;letter-spacing:0.991px">Add.cshtml</div>
<div class="lb" style="left:1405px;padding-left:0.50px;top:7px;height:41px;line-height:41px;font-weight:400;color:#dededf;letter-spacing:1.079px">Update.cshtml</div>
<svg class="ic" style="left:1373px;top:19px" width="18" height="18" viewBox="0 0 18 18"><path d="M3.2 3 L14.8 15 M14.8 3 L3.2 15" fill="none" stroke="#c6c6c8" stroke-width="2.1"/></svg>
</div>
<div id="tool"></div>
<div id="ed"><div id="gut"></div><div id="rul"></div>
<div id="caret"></div>
<div class="ln cur" style="top:113px">1</div>
<div class="cl" style="top:114px;left:790.00px"><span class="r">@page</span></div>
<div class="ln" style="top:141px">2</div>
<div class="cl" style="top:142px;left:790.00px"><span class="r">@model</span> NDPE.RazorPagesPageModel.Pages.Todos.<span class="c">UpdateModel</span></div>
<div class="ln" style="top:169px">3</div>
<div class="cl" style="top:170px;left:790.00px"><span class="r">@{</span></div>
<div class="ln" style="top:197px">4</div>
<div class="cl" style="top:198px;left:841.08px">ViewData[<span class="s">&quot;Title&quot;</span>] = <span class="s">&quot;Update Todo&quot;</span>;</div>
<div class="ln" style="top:225px">5</div>
<div class="cl" style="top:226px;left:790.00px"><span class="r">}</span></div>
<div class="ln" style="top:253px">6</div>
<div class="ln" style="top:281px">7</div>
<div class="cl" style="top:282px;left:790.00px"><span class="p">&lt;</span><span class="t">form</span> <span class="a">method</span><span class="e">=</span><span class="v">&quot;post&quot;</span> <span class="a">class</span><span class="e">=</span><span class="v">&quot;col<i>–</i>6&quot;</span><span class="p">&gt;</span></div>
<div class="ln" style="top:309px">8</div>
<div class="cl" style="top:310px;left:841.08px"><span class="p">&lt;</span><span class="t">input</span> <span class="h">type</span><span class="e">=</span><span class="v">&quot;hidden&quot;</span> <span class="h">asp<i>–</i>for</span><span class="e">=</span><span class="v">&quot;todo.Id&quot;</span> <span class="p">/&gt;</span></div>
<div class="ln" style="top:337px">9</div>
<div class="ln" style="top:365px">10</div>
<div class="cl" style="top:366px;left:841.08px"><span class="p">&lt;</span><span class="t">div</span><span class="p">&gt;</span></div>
<div class="ln" style="top:393px">11</div>
<div class="cl" style="top:394px;left:892.16px"><span class="p">&lt;</span><span class="t">label</span><span class="p">&gt;</span><span class="w">Name</span><span class="p">&lt;/</span><span class="t">label</span><span class="p">&gt;</span></div>
<div class="ln" style="top:421px">12</div>
<div class="cl" style="top:422px;left:892.16px"><span class="p">&lt;</span><span class="t">input</span> <span class="h">asp<i>–</i>for</span><span class="e">=</span><span class="v">&quot;todo.Name&quot;</span> <span class="a">class</span><span class="e">=</span><span class="v">&quot;form<i>–</i>control&quot;</span> <span class="p">/&gt;</span></div>
<div class="ln" style="top:449px">13</div>
<div class="cl" style="top:450px;left:892.16px"><span class="p">&lt;</span><span class="t">span</span> <span class="h">asp<i>–</i>validation<i>–</i>for</span><span class="e">=</span><span class="v">&quot;todo.Name&quot;</span><span class="p">&gt;&lt;/</span><span class="t">span</span><span class="p">&gt;</span></div>
<div class="ln" style="top:477px">14</div>
<div class="cl" style="top:478px;left:841.08px"><span class="p">&lt;/</span><span class="t">div</span><span class="p">&gt;</span></div>
<div class="ln" style="top:505px">15</div>
<div class="ln" style="top:533px">16</div>
<div class="cl" style="top:534px;left:841.08px"><span class="p">&lt;</span><span class="t">br</span> <span class="p">/&gt;</span></div>
<div class="ln" style="top:561px">17</div>
<div class="cl" style="top:562px;left:841.08px"><span class="p">&lt;</span><span class="t">br</span> <span class="p">/&gt;</span></div>
<div class="ln" style="top:589px">18</div>
<div class="ln" style="top:617px">19</div>
<div class="cl" style="top:618px;left:841.08px"><span class="p">&lt;</span><span class="t">div</span><span class="p">&gt;</span></div>
<div class="ln" style="top:645px">20</div>
<div class="cl" style="top:646px;left:892.16px"><span class="p">&lt;</span><span class="t">label</span><span class="p">&gt;</span><span class="w">Is Completed</span><span class="p">&lt;/</span><span class="t">label</span><span class="p">&gt;</span></div>
<div class="ln" style="top:673px">21</div>
<div class="cl" style="top:674px;left:892.16px"><span class="p">&lt;</span><span class="t">input</span> <span class="h">asp<i>–</i>for</span><span class="e">=</span><span class="v">&quot;todo.IsComplete&quot;</span> <span class="h">type</span><span class="e">=</span><span class="v">&quot;checkbox&quot;</span><span class="p">&gt;</span></div>
<div class="ln" style="top:701px">22</div>
<div class="cl" style="top:702px;left:892.16px"><span class="p">&lt;</span><span class="t">span</span> <span class="h">asp<i>–</i>validation<i>–</i>for</span><span class="e">=</span><span class="v">&quot;todo.IsComplete&quot;</span><span class="p">&gt;&lt;/</span><span class="t">span</span><span class="p">&gt;</span></div>
<div class="ln" style="top:729px">23</div>
<div class="cl" style="top:730px;left:841.08px"><span class="p">&lt;/</span><span class="t">div</span><span class="p">&gt;</span></div>
<div class="ln" style="top:757px">24</div>
<div class="ln" style="top:785px">25</div>
<div class="cl" style="top:786px;left:841.08px"><span class="p">&lt;</span><span class="t">div</span> <span class="a">style</span><span class="e">=</span><span class="v">&quot;</span><span class="a">text<i>–</i>align</span><span class="v">: right;&quot;</span><span class="p">&gt;</span></div>
<div class="ln" style="top:813px">26</div>
<div class="cl" style="top:814px;left:892.16px"><span class="p">&lt;</span><span class="t">input</span> <span class="a">type</span><span class="e">=</span><span class="v">&quot;submit&quot;</span> <span class="a">class</span><span class="e">=</span><span class="v">&quot;btn btn<i>–</i>warning&quot;</span> <span class="a">value</span><span class="e">=</span><span class="v">&quot;Update&quot;</span> <span class="p">/&gt;</span></div>
<div class="ln" style="top:841px">27</div>
<div class="cl" style="top:842px;left:841.08px"><span class="p">&lt;/</span><span class="t">div</span><span class="p">&gt;</span></div>
<div class="ln" style="top:869px">28</div>
<div class="ln" style="top:897px">29</div>
<div class="cl" style="top:898px;left:790.00px"><span class="p">&lt;/</span><span class="t">form</span><span class="p">&gt;</span></div>
</div>
</body></html>
